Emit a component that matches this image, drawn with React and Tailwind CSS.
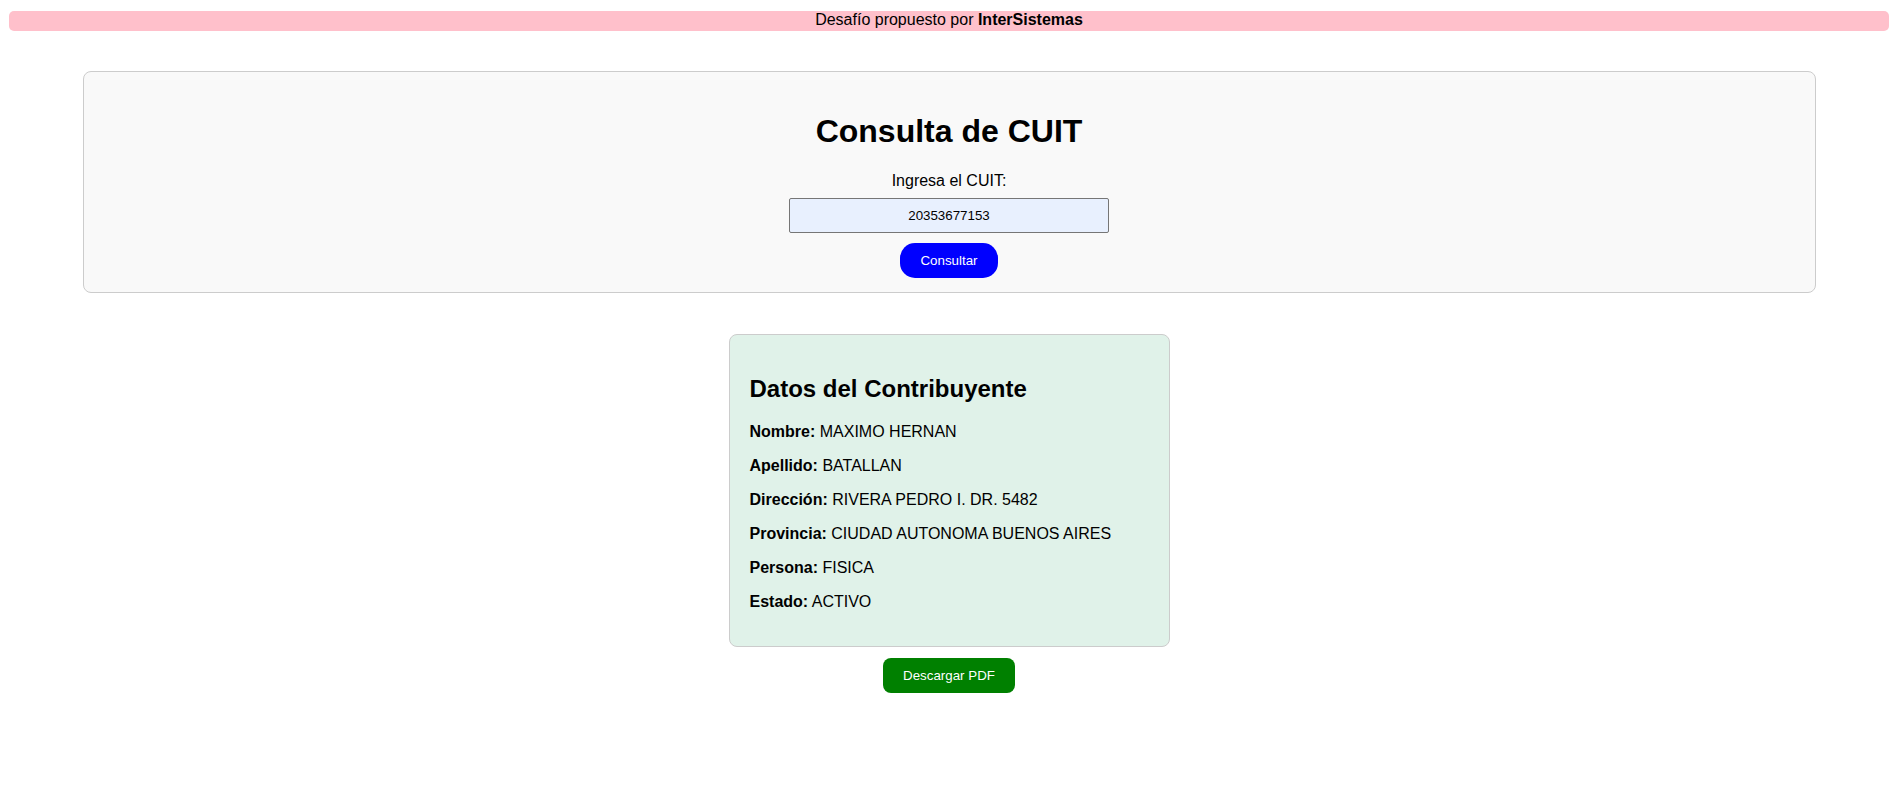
import { useState } from "react";

const datos = [
  { label: "Nombre", value: "MAXIMO HERNAN" },
  { label: "Apellido", value: "BATALLAN" },
  { label: "Dirección", value: "RIVERA PEDRO I. DR. 5482" },
  { label: "Provincia", value: "CIUDAD AUTONOMA BUENOS AIRES" },
  { label: "Persona", value: "FISICA" },
  { label: "Estado", value: "ACTIVO" },
];

const App = () => {
  const [cuit, setCuit] = useState("20353677153");

  return (
    <div className="w-[1898px] min-h-[807px] bg-white text-black font-['Liberation_Sans',Arial,sans-serif] leading-[normal]">
      {/* banner */}
      <div className="mt-[11px] mx-[9px] h-[20px] rounded-[5px] bg-[#ffc0cb] text-center text-[16px] leading-[18px]">
        Desafío propuesto por <b className="font-bold">InterSistemas</b>
      </div>

      {/* consulta */}
      <div className="mt-[40px] mx-auto w-[1733px] border border-[#cccccc] rounded-[8px] bg-[#f9f9f9] pt-[20px] pb-[14px] flex flex-col items-center">
        <h1 className="mt-[21px] mb-[22px] text-[32px] leading-[37px] font-bold">Consulta de CUIT</h1>
        <label htmlFor="cuit" className="text-[16px] leading-[18px]">
          Ingresa el CUIT:
        </label>
        <input
          id="cuit"
          value={cuit}
          onChange={(e) => setCuit(e.target.value)}
          className="mt-[8px] w-[320px] h-[35px] border border-[#767676] rounded-[2px] bg-[#e8f0fe] text-center text-[13.333px] outline-none"
        />
        <button className="mt-[10px] w-[98px] h-[35px] rounded-[15px] bg-[#0000ff] text-white text-[13.333px]">
          Consultar
        </button>
      </div>

      {/* resultado */}
      <div className="mt-[41px] mx-auto w-[441px] border border-[#cccccc] rounded-[8px] bg-[#e0f2e9] px-[20px] py-[20px]">
        <h2 className="my-[20px] text-[24px] leading-[28px] font-bold">Datos del Contribuyente</h2>
        {datos.map((d) => (
          <p key={d.label} className="my-[16px] text-[16px] leading-[17.9px]">
            <strong className="font-bold">{d.label}:</strong> {d.value}
          </p>
        ))}
      </div>

      <div className="flex justify-center">
        <button className="mt-[11px] w-[132px] h-[35px] rounded-[8px] bg-[#008000] text-white text-[13.333px]">
          Descargar PDF
        </button>
      </div>
    </div>
  );
};

export default App;
